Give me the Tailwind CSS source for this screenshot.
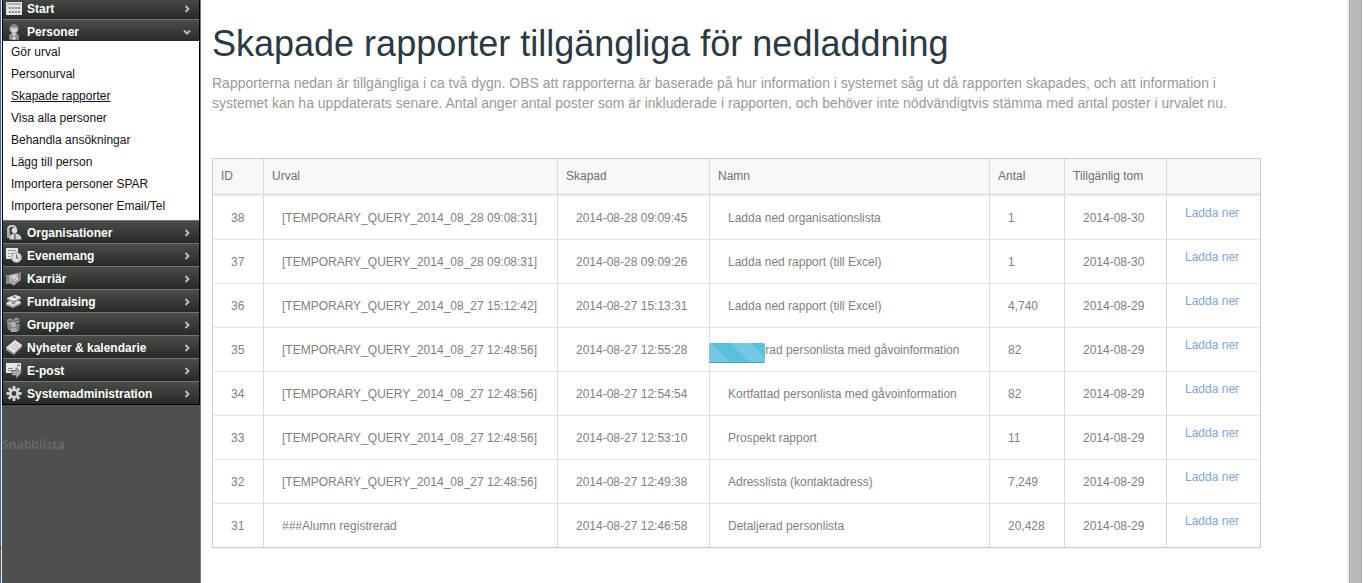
<!DOCTYPE html>
<html lang="sv">
<head>
  <meta charset="UTF-8">
  <meta name="viewport" content="width=device-width, initial-scale=1.0">
  <title>Skapade rapporter</title>
  <script src="https://cdn.jsdelivr.net/npm/@tailwindcss/browser@4"></script>
</head>
<body class="bg-white font-['Liberation_Sans',Arial,sans-serif] text-xs">
  <div class="flex min-h-screen">

    <!-- Window edge -->
    <div class="flex w-[2px] flex-none flex-col border-r border-[#e8e8e8] bg-[#3f62a0]">
      <div class="mt-auto mb-2 h-7 border-t border-black bg-[#5a5654]"></div>
    </div>

    <!-- Sidebar -->
    <aside class="w-[199px] flex-none border-r border-[#7b7b7b] bg-[#4e4f51] overflow-hidden">
      <nav class="-mt-1 border-x border-b border-black font-bold text-white">
        <a href="#" class="flex h-[23px] items-center border-t border-[#777] bg-linear-to-b from-[#4b4c4a] to-[#262b27] pt-[2px] pr-2 pl-[3px]">
          <svg class="mr-[5px] size-4" viewBox="0 0 16 16"><path fill="#e4e4e4" d="M0 1h16v13H0z"/><path fill="#b5b5b5" d="M1 2h14v2H1z"/><path fill="#888" d="M3 6h2v2H3zM6 6h2v2H6zM9 6h2v2H9zM12 6h2v2h-2zM3 10h2v2H3zM6 10h2v2H6zM9 10h2v2H9zM12 10h2v2h-2z"/></svg>
          <span class="flex-1">Start</span>
          <svg class="size-2" viewBox="0 0 8 8" fill="none" stroke="#bbb" stroke-width="2"><path d="M2.500 1l3 3-3 3"/></svg>
        </a>
        <a href="#" class="flex h-[23px] items-center border-t border-[#777] bg-linear-to-b from-[#4b4c4a] to-[#262b27] pt-[2px] pr-2 pl-[3px]">
          <svg class="mr-[5px] size-4" viewBox="0 0 16 16"><path fill="#8d8d8d" d="M3 15.500c-.5-5 1-6.500 5-6.500s5.500 1.500 5 6.500c-3 .7-7 .7-10 0z"/><path fill="#d8d8d8" d="M5.500 9.500l2.500 3 2.500-3zM6.500 13h3v2.500h-3z"/><circle cx="8" cy="5" r="4.400" fill="#bcbcbc"/><path fill="#868686" d="M3.600 5C3.300 1.800 5.500.3 8 .3s4.700 1.500 4.400 4.700C11 3 9 3.800 7.500 3 6 3 5 3.500 3.600 5z"/><path fill="#e2e2e2" d="M5 5.500h6L8 9z"/></svg>
          <span class="flex-1">Personer</span>
          <svg class="size-2" viewBox="0 0 8 8" fill="none" stroke="#bbb" stroke-width="2"><path d="M1 2.500l3 3 3-3"/></svg>
        </a>
        <ul class="bg-white pb-[3px] pl-2 font-normal leading-[22px] text-[#1a1020]">
          <li class="-mt-px"><a href="#">Gör urval</a></li>
          <li><a href="#">Personurval</a></li>
          <li><a href="#" class="underline">Skapade rapporter</a></li>
          <li><a href="#">Visa alla personer</a></li>
          <li><a href="#">Behandla ansökningar</a></li>
          <li><a href="#">Lägg till person</a></li>
          <li><a href="#">Importera personer SPAR</a></li>
          <li><a href="#">Importera personer Email/Tel</a></li>
        </ul>
        <a href="#" class="flex h-[23px] items-center border-t border-[#777] bg-linear-to-b from-[#4b4c4a] to-[#262b27] pt-[2px] pr-2 pl-[3px]">
          <svg class="mr-[5px] size-4" viewBox="0 0 16 16"><path fill="none" stroke="#ccc" stroke-width="2" d="M2 5C2 2 4 1 6 1s4 1 4 4"/><path fill="#a8a8a8" d="M1 5h3v8H1z"/><circle cx="8.500" cy="5.500" r="2.800" fill="#e0e0e0"/><path fill="#d2d2d2" d="M3.500 14.500c0-4.500 2-6 5.500-6s6.500 2 6.500 6z"/><path fill="#777" d="M8 9h1.500l.5 5H8z"/></svg>
          <span class="flex-1">Organisationer</span>
          <svg class="size-2" viewBox="0 0 8 8" fill="none" stroke="#bbb" stroke-width="2"><path d="M2.500 1l3 3-3 3"/></svg>
        </a>
        <a href="#" class="flex h-[23px] items-center border-t border-[#777] bg-linear-to-b from-[#4b4c4a] to-[#262b27] pt-[2px] pr-2 pl-[3px]">
          <svg class="mr-[5px] size-4" viewBox="0 0 16 16"><path fill="#e4e4e4" d="M0 0h12v11H0z"/><path fill="#999" d="M2 2h8v1H2zM2 5h2v1H2zM5 5h2v1H5zM2 8h2v1H2z"/><circle cx="10.500" cy="9.500" r="5" fill="#ddd" stroke="#999"/><path fill="none" stroke="#666" d="M10.500 6.500v3.500H13"/></svg>
          <span class="flex-1">Evenemang</span>
          <svg class="size-2" viewBox="0 0 8 8" fill="none" stroke="#bbb" stroke-width="2"><path d="M2.500 1l3 3-3 3"/></svg>
        </a>
        <a href="#" class="flex h-[23px] items-center border-t border-[#777] bg-linear-to-b from-[#4b4c4a] to-[#262b27] pt-[2px] pr-2 pl-[3px]">
          <svg class="mr-[5px] size-4" viewBox="0 0 16 16"><path fill="#888" d="M0 4h3v9H0zM12 3l3-3v9l-2 2z"/><path fill="#b0b0b0" d="M3 4l4-1 5-1 1 8-5 4.500L3 12z"/><path fill="#d4d4d4" d="M5 5l5-1 2 5-4 1z"/><path fill="none" stroke="#888" stroke-width=".8" d="M4 10l3 3M6 8l4 4M8 7l3 3"/></svg>
          <span class="flex-1">Karriär</span>
          <svg class="size-2" viewBox="0 0 8 8" fill="none" stroke="#bbb" stroke-width="2"><path d="M2.500 1l3 3-3 3"/></svg>
        </a>
        <a href="#" class="flex h-[23px] items-center border-t border-[#777] bg-linear-to-b from-[#4b4c4a] to-[#262b27] pt-[2px] pr-2 pl-[3px]">
          <svg class="mr-[5px] size-4" viewBox="0 0 16 16"><path fill="#aaa" d="M0 9l9-4 6 3v2l-8 4-7-3z"/><path fill="#e6e6e6" d="M0 9l8-4 7 3-8 4z"/><path fill="#999" d="M1 4l9-3 5 2v2L8 9 1 6z"/><path fill="#f0f0f0" d="M1 4l8-3 6 2-7 4z"/><path fill="#888" d="M6 3l3-1 2 1-3 1.500zM5 9l3-1 2 1-3 1.500z"/></svg>
          <span class="flex-1">Fundraising</span>
          <svg class="size-2" viewBox="0 0 8 8" fill="none" stroke="#bbb" stroke-width="2"><path d="M2.500 1l3 3-3 3"/></svg>
        </a>
        <a href="#" class="flex h-[23px] items-center border-t border-[#777] bg-linear-to-b from-[#4b4c4a] to-[#262b27] pt-[2px] pr-2 pl-[3px]">
          <svg class="mr-[5px] size-4" viewBox="0 0 16 16"><path fill="#858585" d="M1 7h6v6H2zM7 7h7l-1 7H7z"/><circle cx="4" cy="4.500" r="3" fill="#999"/><circle cx="10.500" cy="3.500" r="3" fill="#8c8c8c"/><circle cx="7.500" cy="7.500" r="2.500" fill="#b4b4b4"/><path fill="#a8a8a8" d="M4.500 15c0-3 1-4.500 3-4.500s3.500 1.500 3.500 4.500z"/><path fill="#666" d="M2 4l3-1 1 2H2zM9 3h4v1H9z"/></svg>
          <span class="flex-1">Grupper</span>
          <svg class="size-2" viewBox="0 0 8 8" fill="none" stroke="#bbb" stroke-width="2"><path d="M2.500 1l3 3-3 3"/></svg>
        </a>
        <a href="#" class="flex h-[23px] items-center border-t border-[#777] bg-linear-to-b from-[#4b4c4a] to-[#262b27] pt-[2px] pr-2 pl-[3px]">
          <svg class="mr-[5px] size-4" viewBox="0 0 16 16"><path fill="#999" d="M0 8l9-8 7 5v2l-8 8-8-5z"/><path fill="#e4e4e4" d="M0 7.500L9 0l7 5-8 8z"/><path fill="none" stroke="#aaa" stroke-width=".8" d="M4 6l6 4M6 4.500l6 4M8 3l5 3.500"/></svg>
          <span class="flex-1">Nyheter &amp; kalendarie</span>
          <svg class="size-2" viewBox="0 0 8 8" fill="none" stroke="#bbb" stroke-width="2"><path d="M2.500 1l3 3-3 3"/></svg>
        </a>
        <a href="#" class="flex h-[23px] items-center border-t border-[#777] bg-linear-to-b from-[#4b4c4a] to-[#262b27] pt-[2px] pr-2 pl-[3px]">
          <svg class="mr-[5px] size-4" viewBox="0 0 16 16"><path fill="#e8e8e8" d="M0 0h15v10H0z"/><path fill="#888" d="M11 1.500h3v2h-3zM2 5h5v1H2zM2 7h4v1H2z"/><path fill="#aaa" stroke="#555" stroke-width=".8" d="M6 7.500h4V4.500l5.500 5.500-5.500 5.500v-3H6z"/></svg>
          <span class="flex-1">E-post</span>
          <svg class="size-2" viewBox="0 0 8 8" fill="none" stroke="#bbb" stroke-width="2"><path d="M2.500 1l3 3-3 3"/></svg>
        </a>
        <a href="#" class="flex h-[23px] items-center border-t border-[#777] bg-linear-to-b from-[#4b4c4a] to-[#262b27] pt-[2px] pr-2 pl-[3px]">
          <svg class="mr-[5px] size-4" viewBox="0 0 16 16" fill="none" stroke="#d4d4d4"><circle cx="8" cy="7.500" r="3.700" stroke-width="2.600"/><path stroke-width="2.800" d="M8 0v3M8 12v3M.5 7.500h3M12.500 7.500h3M2.700 2.200l2 2M11.300 10.800l2 2M2.700 12.800l2-2M11.300 4.200l2-2"/></svg>
          <span class="flex-1">Systemadministration</span>
          <svg class="size-2" viewBox="0 0 8 8" fill="none" stroke="#bbb" stroke-width="2"><path d="M2.500 1l3 3-3 3"/></svg>
        </a>
      </nav>
      <h2 class="mt-8 font-['Open_Sans',sans-serif] text-xs leading-4 font-bold text-[#676866]">Snabblista</h2>
    </aside>

    <!-- Content -->
    <main class="min-w-0 flex-1 pt-6 pr-[86px] pb-8 pl-[11px]">
      <h1 class="text-4xl leading-10 text-[#2b3a42]">Skapade rapporter tillgängliga för nedladdning</h1>
      <p class="mt-[9px] text-sm leading-5 text-[#999]">Rapporterna nedan är tillgängliga i ca två dygn. OBS att rapporterna är baserade på hur information i systemet såg ut då rapporten skapades, och att information i systemet kan ha uppdaterats senare. Antal anger antal poster som är inkluderade i rapporten, och behöver inte nödvändigtvis stämma med antal poster i urvalet nu.</p>

      <table class="mt-[45px] w-full table-fixed border-separate border-spacing-0 border border-[#ccc] text-left text-[#808080] shadow-sm shadow-black/5 [&_td]:h-11 [&_td]:border-b [&_td]:border-[#e5e5e5] [&_td]:px-[18px] [&_td:not(:last-child)]:border-r [&_td:not(:last-child)]:border-r-[#d9d9d9] [&_th]:h-[37px] [&_th]:border-b-3 [&_th]:border-[#e5e5e5] [&_th]:bg-[#f8f8f8] [&_th]:px-2 [&_th]:font-normal [&_th]:text-[#707070] [&_th:not(:last-child)]:border-r [&_th:not(:last-child)]:border-r-[#d9d9d9] [&_tr:last-child>td]:h-[43px] [&_tr:last-child>td]:border-b-0 [&_td:last-child]:pt-[9px] [&_td:last-child]:align-top [&_a]:text-[#7aa7d9]">
        <thead>
          <tr>
            <th class="w-[51px]">ID</th>
            <th>Urval</th>
            <th class="w-[152px]">Skapad</th>
            <th class="w-[280px]">Namn</th>
            <th class="w-[75px]">Antal</th>
            <th class="w-[102px]">Tillgänlig tom</th>
            <th class="w-[93px]"></th>
          </tr>
        </thead>
        <tbody>
          <tr>
            <td>38</td>
            <td>[TEMPORARY_QUERY_2014_08_28 09:08:31]</td>
            <td>2014-08-28 09:09:45</td>
            <td>Ladda ned organisationslista</td>
            <td>1</td>
            <td>2014-08-30</td>
            <td><a href="#">Ladda ner</a></td>
          </tr>
          <tr>
            <td>37</td>
            <td>[TEMPORARY_QUERY_2014_08_28 09:08:31]</td>
            <td>2014-08-28 09:09:26</td>
            <td>Ladda ned rapport (till Excel)</td>
            <td>1</td>
            <td>2014-08-30</td>
            <td><a href="#">Ladda ner</a></td>
          </tr>
          <tr>
            <td>36</td>
            <td>[TEMPORARY_QUERY_2014_08_27 15:12:42]</td>
            <td>2014-08-27 15:13:31</td>
            <td>Ladda ned rapport (till Excel)</td>
            <td>4,740</td>
            <td>2014-08-29</td>
            <td><a href="#">Ladda ner</a></td>
          </tr>
          <tr>
            <td>35</td>
            <td>[TEMPORARY_QUERY_2014_08_27 12:48:56]</td>
            <td>2014-08-27 12:55:28</td>
            <td class="relative">
              Detaljerad personlista med gåvoinformation
              <!-- Progress bar lying over the start of the name -->
              <div class="absolute top-[15px] -left-px h-5 w-14 rounded-xs border-b border-[#4a9dbd] bg-[#5bc0de] bg-[linear-gradient(45deg,#ffffff26_25%,transparent_25%,transparent_50%,#ffffff26_50%,#ffffff26_75%,transparent_75%)] bg-[length:40px_40px] bg-[position:22px_0px]"></div>
            </td>
            <td>82</td>
            <td>2014-08-29</td>
            <td><a href="#">Ladda ner</a></td>
          </tr>
          <tr>
            <td>34</td>
            <td>[TEMPORARY_QUERY_2014_08_27 12:48:56]</td>
            <td>2014-08-27 12:54:54</td>
            <td>Kortfattad personlista med gåvoinformation</td>
            <td>82</td>
            <td>2014-08-29</td>
            <td><a href="#">Ladda ner</a></td>
          </tr>
          <tr>
            <td>33</td>
            <td>[TEMPORARY_QUERY_2014_08_27 12:48:56]</td>
            <td>2014-08-27 12:53:10</td>
            <td>Prospekt rapport</td>
            <td>11</td>
            <td>2014-08-29</td>
            <td><a href="#">Ladda ner</a></td>
          </tr>
          <tr>
            <td>32</td>
            <td>[TEMPORARY_QUERY_2014_08_27 12:48:56]</td>
            <td>2014-08-27 12:49:38</td>
            <td>Adresslista (kontaktadress)</td>
            <td>7,249</td>
            <td>2014-08-29</td>
            <td><a href="#">Ladda ner</a></td>
          </tr>
          <tr>
            <td>31</td>
            <td>###Alumn registrerad</td>
            <td>2014-08-27 12:46:58</td>
            <td>Detaljerad personlista</td>
            <td>20,428</td>
            <td>2014-08-29</td>
            <td><a href="#">Ladda ner</a></td>
          </tr>
        </tbody>
      </table>
    </main>

    <!-- Right frame edge -->
    <div class="w-4 flex-none border-r border-white bg-[#f0f0f0] pl-[2px]">
      <div class="h-full border-x border-[#a8a8a8] bg-[#bababa]"></div>
    </div>
  </div>
</body>
</html>
